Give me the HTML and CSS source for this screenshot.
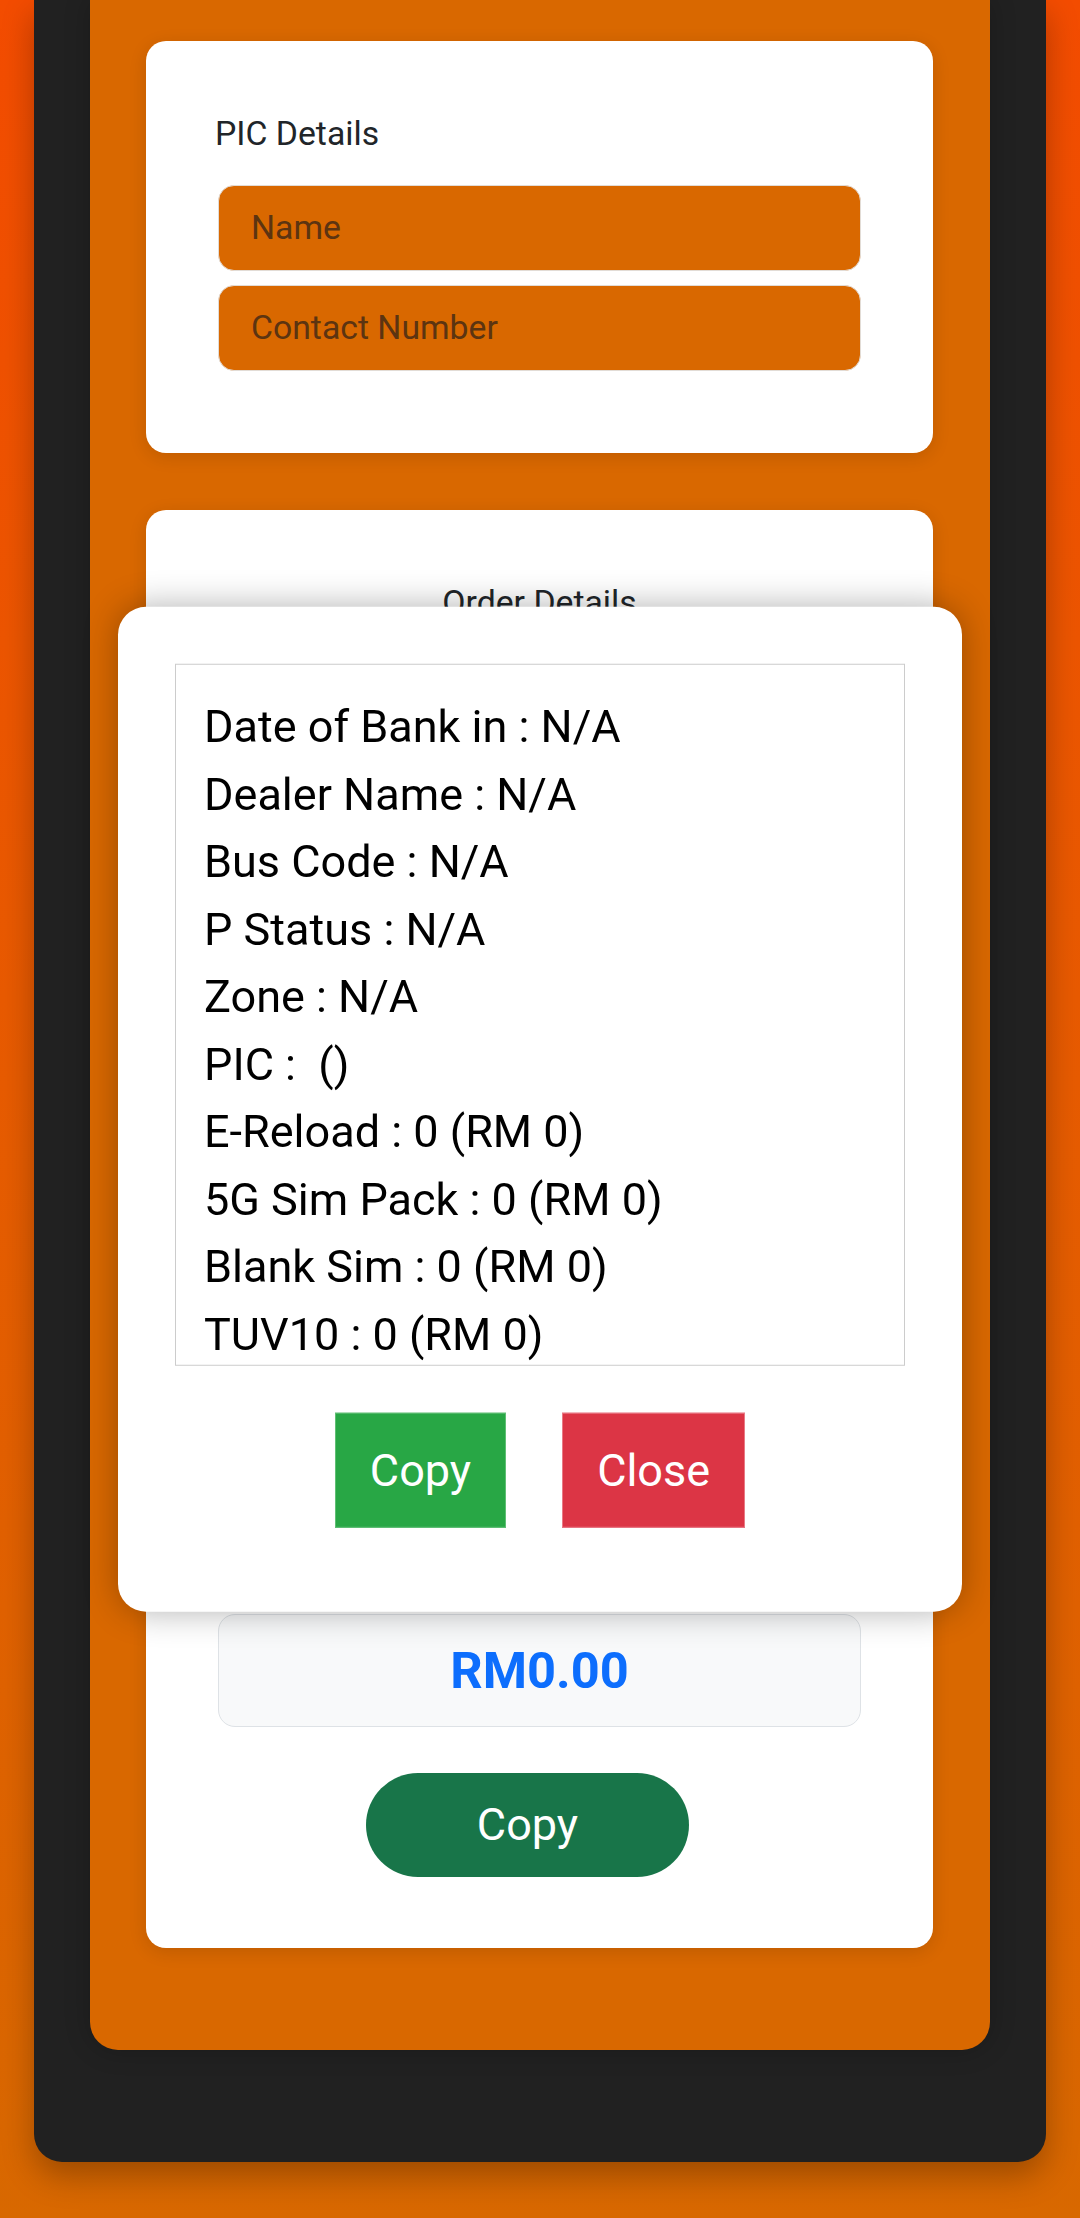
FILE: index.html
```html
<!DOCTYPE html>
<html lang="en">
<head>
<meta charset="utf-8">
<title>Order</title>
<link rel="stylesheet" href="styles.css">
</head>
<body>
  <div class="frame">
    <main class="panel">
      <section class="card card-pic">
        <div class="label">PIC Details</div>
        <div class="fields">
          <input class="field" type="text" placeholder="Name">
          <input class="field" type="text" placeholder="Contact Number">
        </div>
      </section>
      <section class="card card-order">
        <div class="label label-center">Order Details</div>
        <div class="order-body"></div>
        <div class="total">RM0.00</div>
        <div class="actions">
          <button class="btn-pill" type="button">Copy</button>
        </div>
      </section>
    </main>
  </div>

  <div class="modal">
    <div class="summary">
      <div class="line">Date of Bank in : N/A</div>
      <div class="line">Dealer Name : N/A</div>
      <div class="line">Bus Code : N/A</div>
      <div class="line">P Status : N/A</div>
      <div class="line">Zone : N/A</div>
      <div class="line">PIC :  ()</div>
      <div class="line">E-Reload : 0 (RM 0)</div>
      <div class="line">5G Sim Pack : 0 (RM 0)</div>
      <div class="line">Blank Sim : 0 (RM 0)</div>
      <div class="line">TUV10 : 0 (RM 0)</div>
    </div>
    <div class="modal-actions">
      <button class="btn btn-copy" type="button">Copy</button>
      <button class="btn btn-close" type="button">Close</button>
    </div>
  </div>
</body>
</html>
```

FILE: styles.css
```css
html {
  overflow: hidden;
}

body {
  margin: 0;
  padding: 0 34px 55px;
  font-family: Roboto, "Noto Sans", "Liberation Sans", sans-serif;
  background: linear-gradient(180deg, #f34c00 0%, #e85a00 45%, #d86800 100%);
  min-height: 2218px;
  box-sizing: border-box;
}

.frame {
  background: #212121;
  border-radius: 0 0 28px 28px;
  padding: 0 56px 112px;
  box-shadow: 0 14px 32px rgba(0, 0, 0, 0.28);
}

.panel {
  background: #d96800;
  border-radius: 0 0 28px 28px;
  padding: 41px 57px 102px 56px;
  display: flex;
  flex-direction: column;
  gap: 57px;
  box-shadow: 0 0 26px rgba(0, 0, 0, 0.22);
}

.card {
  background: #ffffff;
  border-radius: 20px;
  padding: 68px 72px 82px;
  box-shadow: 0 4px 18px rgba(0, 0, 0, 0.12);
  display: flex;
  flex-direction: column;
}

.card-order {
  padding-bottom: 71px;
}

.label {
  font-size: 33.75px;
  line-height: 50.6px;
  color: #212529;
  margin-left: -3px;
}

.label-center {
  text-align: center;
  margin-left: 0;
}

.fields {
  margin-top: 25px;
  display: flex;
  flex-direction: column;
  gap: 14px;
}

.field {
  display: block;
  width: 100%;
  height: 86px;
  box-sizing: border-box;
  margin: 0;
  padding: 0 32px;
  font-family: Roboto, "Noto Sans", "Liberation Sans", sans-serif;
  font-size: 33.75px;
  color: #212529;
  background: #d96800;
  border: 1.5px solid #e2dcd6;
  border-radius: 16px;
  outline: none;
}

.field::placeholder {
  color: #5c3411;
  opacity: 1;
}

.order-body {
  height: 986px;
}

.total {
  height: 113px;
  box-sizing: border-box;
  border: 1.5px solid #dee2e6;
  border-radius: 17px;
  background: #f8f9fa;
  display: flex;
  align-items: center;
  justify-content: center;
  font-size: 50.6px;
  font-weight: 700;
  color: #0d6efd;
}

.actions {
  margin-top: 46px;
  display: flex;
  justify-content: center;
  padding-right: 24px;
}

.btn-pill {
  font-family: Roboto, "Noto Sans", "Liberation Sans", sans-serif;
  font-size: 45px;
  line-height: 67.5px;
  color: #ffffff;
  background: #187549;
  border: none;
  border-radius: 52px;
  padding: 18px 111px;
  margin: 0;
}

.modal {
  position: fixed;
  left: 50%;
  top: 50%;
  transform: translate(-50%, -50%);
  width: 844px;
  box-sizing: border-box;
  padding: 57px 57px 84px;
  background: #ffffff;
  border-radius: 28px;
  box-shadow: 0 0 34px rgba(0, 0, 0, 0.3);
}

.summary {
  height: 702px;
  box-sizing: border-box;
  border: 1.5px solid #cccccc;
  padding: 28px 28px 0;
  overflow: hidden;
  font-size: 45px;
  line-height: 67.5px;
  color: #000000;
}

.line {
  white-space: pre;
}

.modal-actions {
  margin-top: 47px;
  display: flex;
  justify-content: center;
  gap: 56px;
}

.btn {
  font-family: Roboto, "Noto Sans", "Liberation Sans", sans-serif;
  font-size: 45px;
  line-height: 67.5px;
  color: #ffffff;
  padding: 22.5px 34px;
  margin: 0;
  border-radius: 0;
  border: 1px solid;
}

.btn-copy {
  background: #28a745;
  border-color: #5fbf74;
}

.btn-close {
  background: #dc3545;
  border-color: #e97a85;
}
```
